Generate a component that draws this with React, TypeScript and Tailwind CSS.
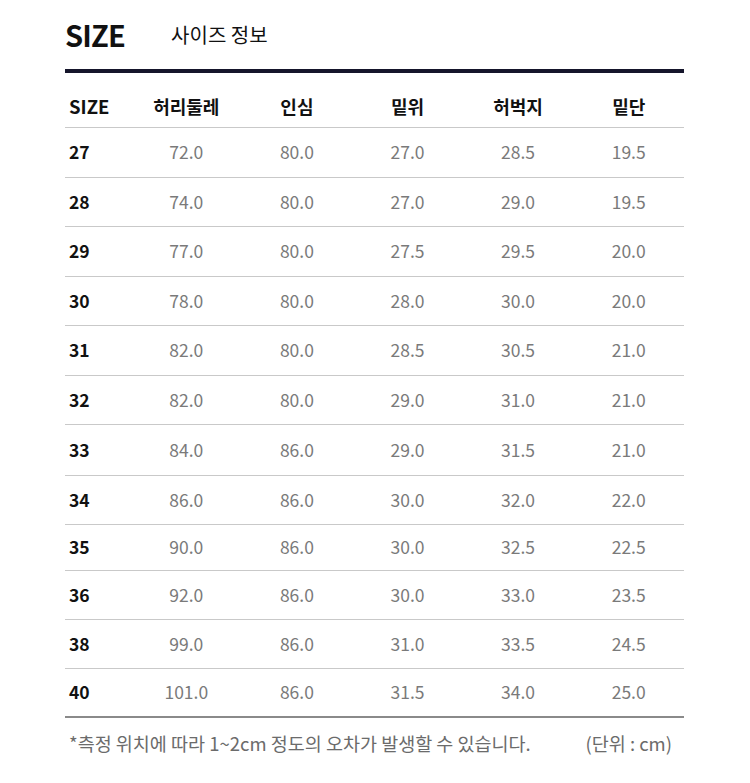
import React from "react";

const rows: { s: string; v: string[]; h: string }[] = [
  { s: "27", v: ["72.0", "80.0", "27.0", "28.5", "19.5"], h: "h-[50px]" },
  { s: "28", v: ["74.0", "80.0", "27.0", "29.0", "19.5"], h: "h-[49px]" },
  { s: "29", v: ["77.0", "80.0", "27.5", "29.5", "20.0"], h: "h-[50px]" },
  { s: "30", v: ["78.0", "80.0", "28.0", "30.0", "20.0"], h: "h-[49px]" },
  { s: "31", v: ["82.0", "80.0", "28.5", "30.5", "21.0"], h: "h-[50px]" },
  { s: "32", v: ["82.0", "80.0", "29.0", "31.0", "21.0"], h: "h-[49px]" },
  { s: "33", v: ["84.0", "86.0", "29.0", "31.5", "21.0"], h: "h-[51px]" },
  { s: "34", v: ["86.0", "86.0", "30.0", "32.0", "22.0"], h: "h-[49px]" },
  { s: "35", v: ["90.0", "86.0", "30.0", "32.5", "22.5"], h: "h-[46px]" },
  { s: "36", v: ["92.0", "86.0", "30.0", "33.0", "23.5"], h: "h-[49px]" },
  { s: "38", v: ["99.0", "86.0", "31.0", "33.5", "24.5"], h: "h-[49px]" },
  { s: "40", v: ["101.0", "86.0", "31.5", "34.0", "25.0"], h: "h-[49px]" },
];

const headers = ["허리둘레", "인심", "밑위", "허벅지", "밑단"];

export default function App() {
  return (
    <div
      className="w-[750px] h-[783px] bg-white"
      style={{ fontFamily: '"Noto Sans CJK KR", "Noto Sans", sans-serif' }}
    >
      <div className="ml-[65px] w-[619px]">
        <div className="h-[69px] flex items-center">
          <span className="text-[29px] font-bold text-[#111] tracking-[-0.8px] leading-none">SIZE</span>
          <span className="ml-[46px] text-[20px] text-[#111] leading-none">사이즈 정보</span>
        </div>
        <div className="h-[4px] bg-[#15152b]" />
        <div className="grid grid-cols-[66px_repeat(5,1fr)] h-[55px] items-center pt-[13px] border-b border-[#c9c9c9]">
          <div className="pl-[4px] text-[18.5px] font-bold text-[#111]">SIZE</div>
          {headers.map((h) => (
            <div key={h} className="text-center text-[18px] font-bold text-[#111]">
              {h}
            </div>
          ))}
        </div>
        {rows.map((r, i) => (
          <div
            key={r.s}
            className={`grid grid-cols-[66px_repeat(5,1fr)] items-center ${r.h} ${
              i === rows.length - 1 ? "border-b-2 border-[#8a8a8a]" : "border-b border-[#c9c9c9]"
            }`}
          >
            <div className="pl-[4px] text-[17.5px] font-bold text-[#111]">{r.s}</div>
            {r.v.map((v, j) => (
              <div key={j} className="text-center text-[17.5px] text-[#7a7a7a]">
                {v}
              </div>
            ))}
          </div>
        ))}
        <div className="flex justify-between items-center h-[52px] text-[18.5px] text-[#6b6b6b] pl-[4px] pr-[12px]">
          <span>*측정 위치에 따라 1~2cm 정도의 오차가 발생할 수 있습니다.</span>
          <span>(단위 : cm)</span>
        </div>
      </div>
    </div>
  );
}
